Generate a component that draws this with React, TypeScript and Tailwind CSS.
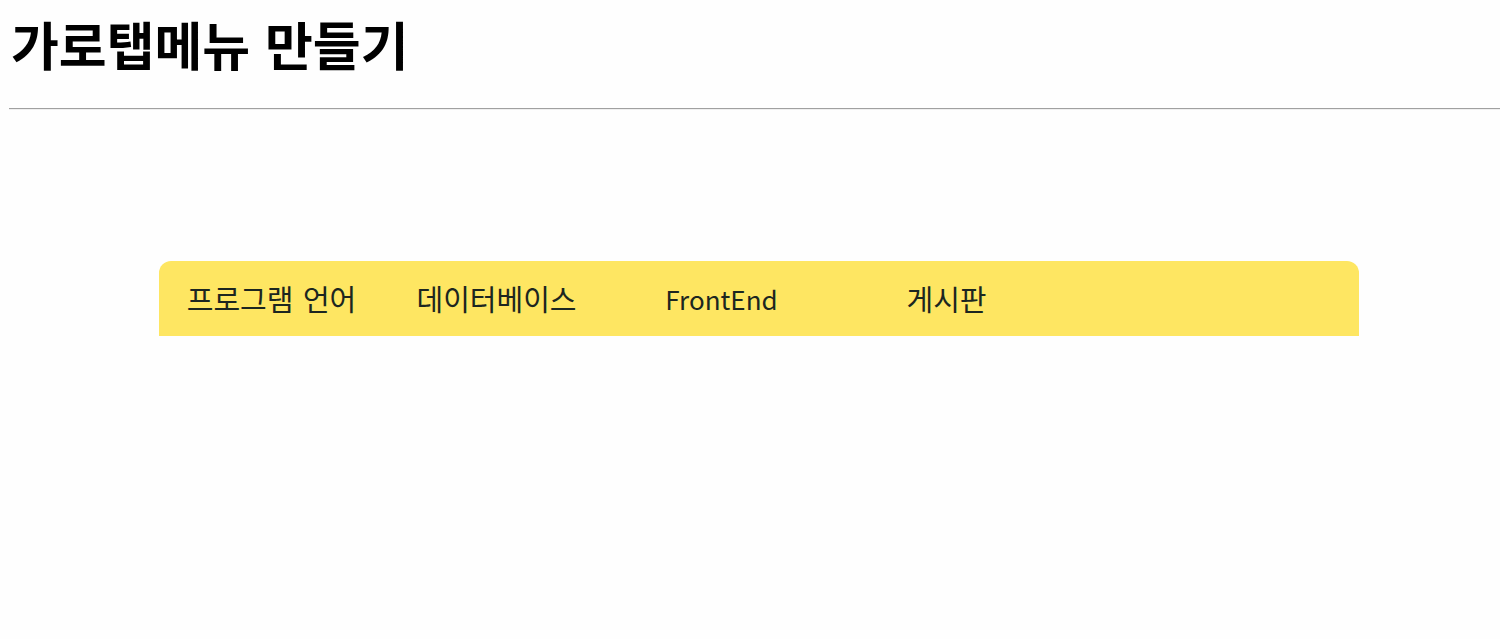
const tabs = [
  { label: '프로그램 언어', size: 'text-[29px] [word-spacing:3px]' },
  { label: '데이터베이스', size: 'text-[29px]' },
  { label: 'FrontEnd', size: 'text-[26px]' },
  { label: '게시판', size: 'text-[29px]' },
]

export default function App() {
  return (
    <div className="min-h-screen bg-[#fefefe] px-2 pt-2 font-['Noto_Sans_CJK_KR','Noto_Sans',sans-serif] text-black">
      <h1 className="mt-[4px] h-[68px] pl-[3px] text-[52px] font-bold leading-[64px] [word-spacing:3px]">
        가로탭메뉴 만들기
      </h1>
      <hr className="mt-[28px] mr-[-8px] ml-px border-t border-b border-t-[#a0a0a0] border-b-[#efefef]" />
      <nav className="ml-[151px] mt-[151px] flex h-[75px] w-[1200px] items-center rounded-t-[12px] bg-[#fee662]">
        {tabs.map((t) => (
          <div key={t.label} className={`w-[225px] text-center leading-none text-[#1c2620] ${t.size}`}>
            {t.label}
          </div>
        ))}
      </nav>
    </div>
  )
}
